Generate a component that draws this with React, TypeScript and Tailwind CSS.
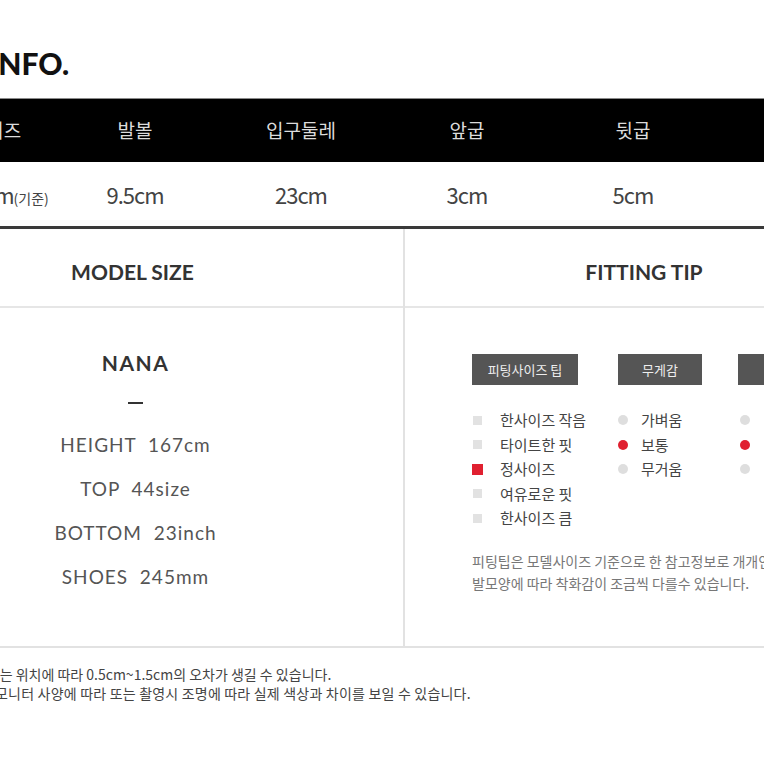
const kr = "font-['Noto_Sans_CJK_KR','Noto_Sans',sans-serif]";
const lat = "font-['Lato','Noto_Sans_CJK_KR',sans-serif]";

const heads = ["사이즈", "발볼", "입구둘레", "앞굽", "뒷굽", "굽높이"];
const vals = ["9.5cm", "23cm", "3cm", "5cm", "4cm"];

const fitSize = ["한사이즈 작음", "타이트한 핏", "정사이즈", "여유로운 핏", "한사이즈 큼"];
const weight = ["가벼움", "보통", "무거움"];
const width = ["좁음", "보통", "넓음"];

export default function App() {
  return (
    <div className="w-[764px] h-[764px] overflow-hidden bg-white">
      <div className="-ml-[62px] w-[945px]">
        {/* title */}
        <div className="h-[98px] pt-[45px]">
          <h1 className={`${lat} text-[30px] leading-[36px] font-black text-[#111] -ml-[17px] whitespace-nowrap`}>
            SIZE INFO.
          </h1>
        </div>

        {/* size table */}
        <div className="border-t border-[#8a8a8a] border-b-[3px] border-b-[#3a3a3a]">
          <div className="flex h-[63px] bg-black items-center">
            {heads.map((h, i) => (
              <div
                key={h}
                className={`${kr} ${i === 0 ? "w-[114px]" : "w-[166px]"} flex justify-center text-[19px] text-[#dcdcdc] whitespace-nowrap`}
              >
                {h}
              </div>
            ))}
          </div>
          <div className="flex h-[64px] items-center">
            <div className={`${kr} w-[114px] flex justify-center items-baseline whitespace-nowrap text-[#444]`}>
              <span className="text-[22px] tracking-[-1px]">230mm</span>
              <span className="text-[14px]">(기준)</span>
            </div>
            {vals.map((v) => (
              <div key={v} className={`${kr} w-[166px] flex justify-center text-[22px] tracking-[-1px] text-[#444]`}>
                {v}
              </div>
            ))}
          </div>
        </div>

        {/* model size / fitting tip */}
        <div className="flex border-b-2 border-[#e2e2e2]">
          <div className="w-[467px] border-r-2 border-[#e2e2e2]">
            <div className="h-[79px] border-b-2 border-[#e6e6e6] flex items-center pt-[9px] pr-[76px] justify-center">
              <span className={`${lat} text-[21px] font-bold text-[#333]`}>MODEL SIZE</span>
            </div>
            <div className="h-[338px] pt-[41px] pr-[70px] flex flex-col items-center">
              <div className={`${lat} text-[21px] leading-[28px] font-bold tracking-[1.5px] text-[#333]`}>NANA</div>
              <div className="h-[2px] w-[15px] bg-[#333] mt-[25px]" />
              <div className={`${lat} mt-[19px] text-[19px] leading-[44px] tracking-[1px] text-[#555] text-center whitespace-nowrap`}>
                <div>HEIGHT&nbsp;&nbsp;167cm</div>
                <div>TOP&nbsp;&nbsp;44size</div>
                <div>BOTTOM&nbsp;&nbsp;23inch</div>
                <div>SHOES&nbsp;&nbsp;245mm</div>
              </div>
            </div>
          </div>

          <div className="flex-1">
            <div className="h-[79px] border-b-2 border-[#e6e6e6] flex items-center pt-[9px] justify-center">
              <span className={`${lat} text-[21px] font-bold text-[#333]`}>FITTING TIP</span>
            </div>
            <div className="h-[338px] pt-[46px] pl-[67px]">
              <div className="flex">
                <div className="w-[146px]">
                  <div className={`${kr} w-[106px] h-[31px] bg-[#555] text-[#eee] text-[13px] flex items-center justify-center`}>
                    피팅사이즈 팁
                  </div>
                  <div className="mt-[23px]">
                    {fitSize.map((t, i) => (
                      <div key={t} className={`${kr} flex items-center h-[24.5px] text-[15px] text-[#444]`}>
                        <span className={`${i === 2 ? "w-[11px] h-[11px] bg-[#e02030]" : "w-[9px] h-[9px] bg-[#e2e2e2] ml-[1px] mr-[1px]"} shrink-0`} />
                        <span className="ml-[17px] whitespace-nowrap">{t}</span>
                      </div>
                    ))}
                  </div>
                </div>
                <div className="w-[120px]">
                  <div className={`${kr} w-[84px] h-[31px] bg-[#555] text-[#eee] text-[13px] flex items-center justify-center`}>
                    무게감
                  </div>
                  <div className="mt-[23px]">
                    {weight.map((t, i) => (
                      <div key={t} className={`${kr} flex items-center h-[24.5px] text-[15px] text-[#444]`}>
                        <span className={`w-[10px] h-[10px] rounded-full shrink-0 ${i === 1 ? "bg-[#e02030]" : "bg-[#dedede]"}`} />
                        <span className="ml-[13px] whitespace-nowrap">{t}</span>
                      </div>
                    ))}
                  </div>
                </div>
                <div className="w-[118px]">
                  <div className={`${kr} w-[84px] h-[31px] bg-[#555] text-[#eee] text-[13px] flex items-center justify-center`}>
                    발볼
                  </div>
                  <div className="mt-[23px] pl-[2px]">
                    {width.map((t, i) => (
                      <div key={t + i} className={`${kr} flex items-center h-[24.5px] text-[15px] text-[#444]`}>
                        <span className={`w-[10px] h-[10px] rounded-full shrink-0 ${i === 1 ? "bg-[#e02030]" : "bg-[#dedede]"}`} />
                        <span className="ml-[16px] whitespace-nowrap">{t}</span>
                      </div>
                    ))}
                  </div>
                </div>
              </div>
              <div className={`${kr} mt-[19px] text-[14px] leading-[22px] text-[#777] whitespace-nowrap`}>
                <div>피팅팁은 모델사이즈 기준으로 한 참고정보로 개개인의</div>
                <div>발모양에 따라 착화감이 조금씩 다를수 있습니다.</div>
              </div>
            </div>
          </div>
        </div>
      </div>

      {/* notes */}
      <div className={`${kr} mt-[17px] text-[14px] leading-[19px] text-[#444] whitespace-nowrap`}>
        <div className="-ml-[39px]">측정하는 위치에 따라 0.5cm~1.5cm의 오차가 생길 수 있습니다.</div>
        <div className="-ml-[5px] tracking-[0.2px]">모니터 사양에 따라 또는 촬영시 조명에 따라 실제 색상과 차이를 보일 수 있습니다.</div>
      </div>
    </div>
  );
}
